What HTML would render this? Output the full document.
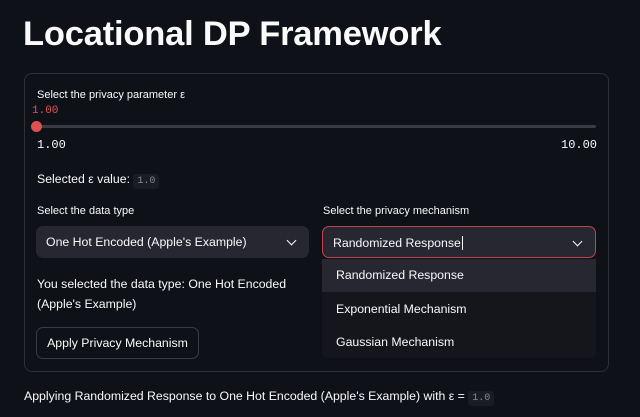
<!DOCTYPE html><html><head><style>
body{margin:0;width:640px;height:417px;background:#0e1117;color:#fafafa;font-family:"Liberation Sans",sans-serif;position:relative;overflow:hidden}
.a{position:absolute;white-space:nowrap}
.m{font-family:"Liberation Mono",monospace}
.code{font-family:"Liberation Mono",monospace;font-size:10px;color:#888;background:#1a1c24;padding:2px 4px;border-radius:3px}
.sel{position:absolute;top:226px;height:32px;background:#262730;border-radius:7px;box-sizing:border-box;font-size:12.3px;line-height:32px;padding-left:10px}
.chev{position:absolute;right:14px;top:11px;width:6px;height:6px;border-right:1.6px solid #fafafa;border-bottom:1.6px solid #fafafa;transform:rotate(45deg)}
</style></head><body>
<div class="a" style="left:23px;top:15px;font-size:34.5px;font-weight:bold;letter-spacing:-0.2px">Locational DP Framework</div>
<div class="a" style="left:24px;top:73px;width:585px;height:299px;border:1px solid #2d3039;border-radius:8px;box-sizing:border-box"></div>
<div class="a" style="left:37px;top:89px;font-size:11px">Select the privacy parameter ε</div>
<div class="a m" style="left:32px;top:105px;font-size:11px;color:#e05555">1.00</div>
<div class="a" style="left:36px;top:125px;width:560px;height:3px;background:#3a3c44;border-radius:2px"></div>
<div class="a" style="left:31px;top:121px;width:11px;height:11px;border-radius:50%;background:#e05050"></div>
<div class="a m" style="left:37px;top:138px;font-size:12px">1.00</div>
<div class="a m" style="left:561px;top:138px;font-size:12px">10.00</div>
<div class="a" style="left:37px;top:172px;font-size:12.3px">Selected <b style="font-weight:normal">ε</b> value: <span class="code">1.0</span></div>
<div class="a" style="left:37px;top:205px;font-size:11px">Select the data type</div>
<div class="a" style="left:323px;top:205px;font-size:11px">Select the privacy mechanism</div>
<div class="sel" style="left:36px;width:273px">One Hot Encoded (Apple's Example)<div class="chev"></div></div>
<div class="sel" style="left:322px;width:274px;border:1px solid #c0454a">Randomized Response<span style="border-left:1px solid #fafafa;margin-left:1px"></span><div class="chev"></div></div>
<div class="a" style="left:37px;top:274px;font-size:12.3px;line-height:20px">You selected the data type: One Hot Encoded<br>(Apple's Example)</div>
<div class="a" style="left:36px;top:327px;width:163px;height:32px;border:1px solid #3a3c44;border-radius:7px;box-sizing:border-box;font-size:12.3px;line-height:30px;text-align:center">Apply Privacy Mechanism</div>
<div class="a" style="left:322px;top:259px;width:274px;height:99px;background:#14161c;border-radius:6px;font-size:12.3px">
<div style="height:33px;background:#262730;line-height:33px;padding-left:14px">Randomized Response</div>
<div style="height:34px;line-height:34px;padding-left:14px">Exponential Mechanism</div>
<div style="height:32px;line-height:32px;padding-left:14px">Gaussian Mechanism</div>
</div>
<div class="a" style="left:24px;top:389px;font-size:12.3px">Applying Randomized Response to One Hot Encoded (Apple's Example) with ε = <span class="code">1.0</span></div>
</body></html>
